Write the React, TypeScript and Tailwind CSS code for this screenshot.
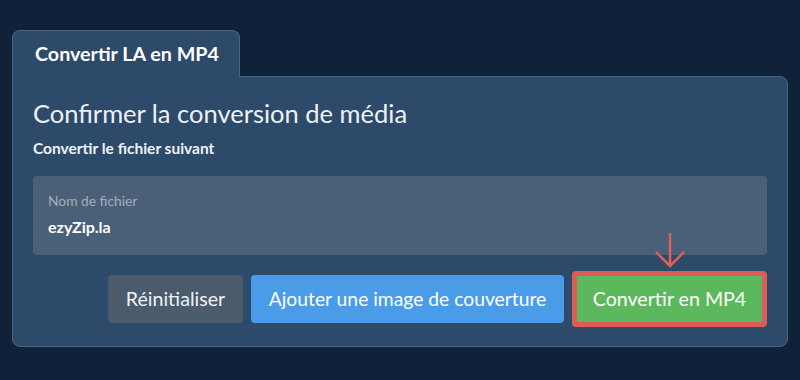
import React from "react";

export default function App() {
  return (
    <div
      className="w-full h-[380px] bg-[#10223a] px-3 pt-[30px]"
      style={{ fontFamily: "Lato, 'Noto Sans', sans-serif" }}
    >
      <div className="flex">
        <div className="relative z-10 -mb-px h-[47px] w-[228px] rounded-t-lg border border-b-0 border-[#4a6486] bg-[#2d4a6a] pl-[22px] flex items-center">
          <span className="text-[19.7px] font-bold text-white leading-none">Convertir LA en MP4</span>
        </div>
      </div>
      <div className="h-[271px] rounded-b-lg rounded-tr-lg border border-[#4a6486] bg-[#2d4a6a] px-5 pt-[19px]">
        <h1 className="text-[25.5px] leading-[34px] text-[#eef2f6] font-normal">Confirmer la conversion de média</h1>
        <p className="mt-[10px] text-[15.5px] leading-[17px] font-bold text-[#eef2f6]">Convertir le fichier suivant</p>
        <div className="mt-[19px] h-[79px] rounded bg-[#4a6078] px-[15px] pt-[17px]">
          <div className="text-[13.8px] leading-[16px] text-[#a3aebb]">Nom de fichier</div>
          <div className="mt-[8px] text-[16px] leading-[19px] font-bold text-white">ezyZip.la</div>
        </div>
        <div className="mt-4 flex items-center justify-end gap-2">
          <button className="h-12 w-[135px] rounded bg-[#4b5b6c] text-[19.6px] text-[#eef2f6] whitespace-nowrap">Réinitialiser</button>
          <button className="h-12 w-[313px] rounded bg-[#4a9be8] text-[19.3px] text-white whitespace-nowrap">Ajouter une image de couverture</button>
          <div className="relative">
            <svg className="absolute left-1/2 -translate-x-1/2 bottom-[calc(100%+3px)]" width="32" height="36" viewBox="0 0 32 36">
              <path d="M16 1 V34 M2 20 L16 34 L30 20" fill="none" stroke="#e0605a" strokeWidth="2.5" />
            </svg>
            <button className="h-14 w-[195px] rounded border-[5px] border-[#dc5c57] bg-[#5cb85c] text-[19.6px] text-white whitespace-nowrap">Convertir en MP4</button>
          </div>
        </div>
      </div>
    </div>
  );
}
